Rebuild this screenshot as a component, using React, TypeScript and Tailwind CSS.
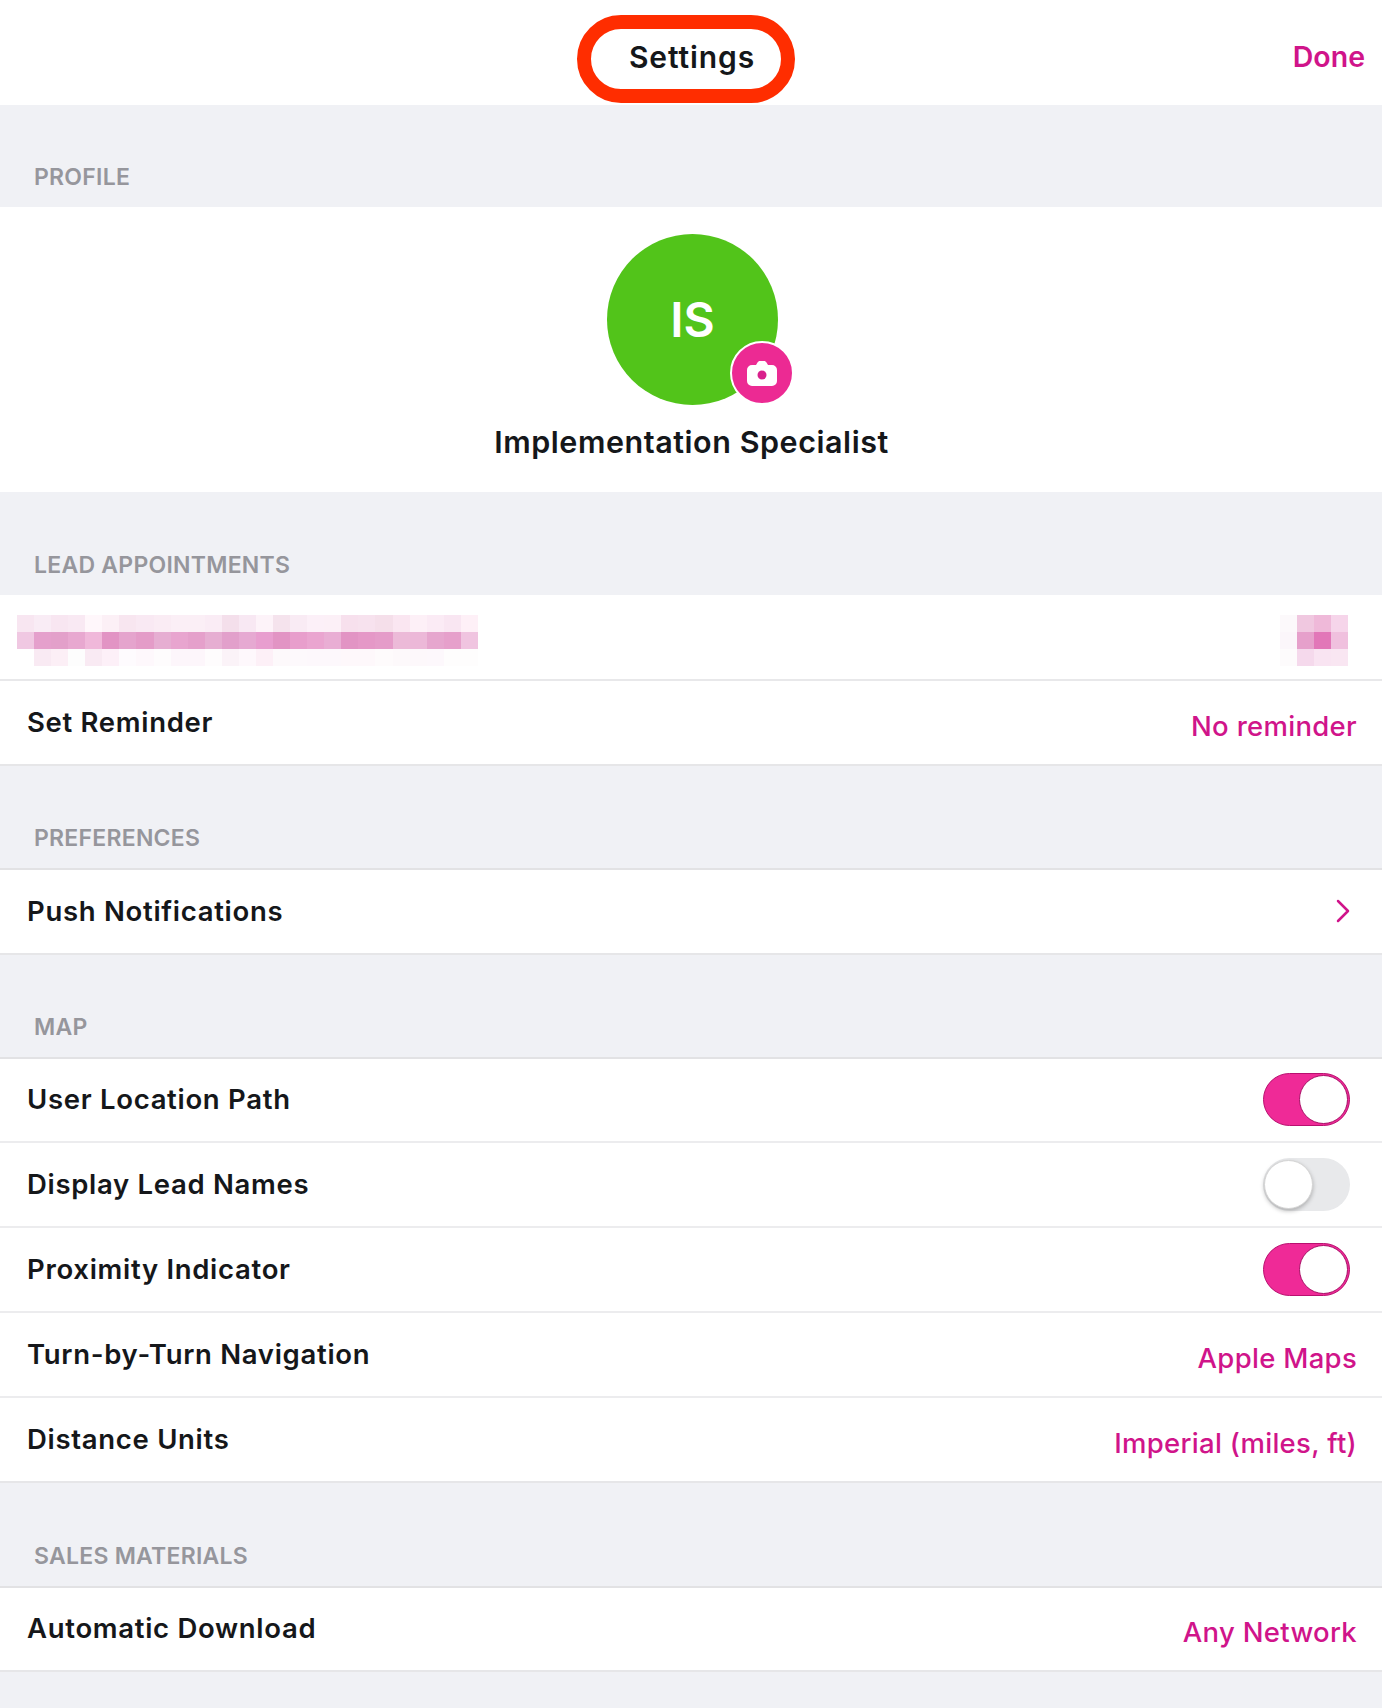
import { useState } from "react";

const pink = "#d0148a";

const leadCells = [
  ["#f8e6f1", "#f9ecf5", "#f8e6f1", "#f9e9f3", "#fff7fb", "#fcf0f6", "#f8e6f0", "#f9e9f3", "#faecf4", "#fbeff6", "#fbeff6", "#faecf5", "#f4dfeb", "#f8e8f3", "#fdf3f9", "#f5e3ed", "#f9ebf4", "#fcf0f8", "#fcf0f7", "#f7e0ed", "#f7e2ee", "#f5dfea", "#fae6f1", "#fdf0f7", "#fbebf5", "#f9e6f2", "#fef0f7"],
  ["#f0c8e2", "#e5a0cc", "#e3a0ca", "#e8a8d0", "#f0b8da", "#e294c4", "#e5a4cd", "#e49cc8", "#e6aed2", "#e8a5cf", "#e5a0cb", "#e6aed2", "#e2a0cb", "#e6a9d2", "#e89ecf", "#e294c4", "#e89ecc", "#eaa5d0", "#e9aed4", "#e294c4", "#e598c7", "#e59cc9", "#ecbad8", "#ecb8d8", "#e6a6ce", "#e6a0cb", "#f0c4e0"],
  ["#ffffff", "#f9eaf3", "#fceff6", "#fdfdfd", "#f9eaf3", "#fdf0f8", "#fefbfe", "#fef8fc", "#fefcfd", "#fdf6fb", "#fdf6fb", "#fefcfd", "#fbf3f8", "#fef8fc", "#fdf0f7", "#fdf9fb", "#fdf9fc", "#fdf8fc", "#fdf8fc", "#fef8fb", "#fef8fb", "#fefbfc", "#fdf9fb", "#fdf8fb", "#fdf8fc", "#fefdfd", "#fefdfd"],
];

const countCells = [
  ["#fcf9fb", "#f0c8e0", "#efb9d9", "#f6d5ea"],
  ["#fbf6fa", "#e6a0cb", "#e277b8", "#f0c0de"],
  ["#fdfbfc", "#f5d9ec", "#f9e4f2", "#f9e6f2"],
];

function Mosaic({ cells }: { cells: string[][] }) {
  const size = 17.07;
  return (
    <svg
      width={cells[0].length * size}
      height={cells.length * size}
      viewBox={`0 0 ${cells[0].length * size} ${cells.length * size}`}
      shapeRendering="crispEdges"
    >
      {cells.map((row, y) =>
        row.map((fill, x) => (
          <rect key={`${x}-${y}`} x={x * size} y={y * size} width={size + 0.5} height={size + 0.5} fill={fill} />
        )),
      )}
    </svg>
  );
}

function SectionLabel({ children, short }: { children: string; short?: boolean }) {
  return (
    <div
      className={`${
        short ? "h-[102px]" : "h-[103px]"
      } flex items-end pb-[13px] pl-[34px] text-[23px] leading-[34px] font-semibold tracking-[0.25px] text-[#96969c]`}
    >
      {children}
    </div>
  );
}

function Toggle({ initial }: { initial: boolean }) {
  const [on, setOn] = useState(initial);
  return (
    <button
      type="button"
      onClick={() => setOn(!on)}
      className={`w-[87px] h-[53px] rounded-full flex items-center px-[1px] ${
        on ? "bg-[#ef2a97] justify-end border border-[#b8106f]" : "bg-[#e8e9eb] justify-start"
      }`}
    >
      <span
        className={`block w-[49px] h-[49px] rounded-full bg-white ${
          on ? "border border-[#a80f66]" : "border border-[#d4d4d4] shadow-[0_2px_4px_rgba(0,0,0,0.25)]"
        }`}
      />
    </button>
  );
}

function Row({ label, value, children, last }: { label: string; value?: string; children?: React.ReactNode; last?: boolean }) {
  return (
    <div
      className={`h-[84.8px] bg-white flex items-center justify-between pl-[27px] ${
        last ? "border-b-2 border-[#e6e6e8]" : "border-b-2 border-[#ececee]"
      }`}
    >
      <span className="text-[27.5px] font-semibold tracking-[0.7px] text-[#15171a]">{label}</span>
      {value ? (
        <span className="pr-[25px] pt-[8px] text-[27.5px] font-medium tracking-[0.3px]" style={{ color: pink }}>
          {value}
        </span>
      ) : (
        <div className="pr-[32px] flex items-center">{children}</div>
      )}
    </div>
  );
}

export default function App() {
  return (
    <div className="w-[1382px] h-[1708px] overflow-hidden bg-[#f0f1f5] font-['Inter',sans-serif]">
      {/* Nav bar */}
      <div className="relative h-[105px] bg-white flex items-center justify-center">
        <span className="text-[30px] font-semibold tracking-[0.9px] text-[#15171a] pl-[2px] pt-[9px]">Settings</span>
        <span className="absolute right-[17px] top-[37px] text-[28.5px] leading-[40px] font-semibold" style={{ color: pink }}>
          Done
        </span>
        <div className="absolute left-[577px] top-[15px] w-[218px] h-[88px] rounded-full border-[14px] border-[#ff2d00]" />
      </div>

      <div className="h-[102px] flex items-end pb-[13px] pl-[34px] text-[23px] leading-[34px] font-semibold tracking-[0.25px] text-[#96969c]">
        PROFILE
      </div>
      <div className="h-[285px] bg-white flex flex-col items-center pt-[27px]">
        <div className="relative w-[171px] h-[171px] rounded-full bg-[#52c41a] flex items-center justify-center ml-[3px]">
          <span className="text-[48px] font-semibold text-white">IS</span>
          <div className="absolute left-[123px] top-[107px] w-[64px] h-[64px] rounded-full bg-[#ec2a93] border-2 border-white flex items-center justify-center">
            <svg width="30" height="25" viewBox="0 0 30 25">
              <path
                fill="#fff"
                d="M5 4h4l1.500-2.500C11 .6 11.800 0 13 0h4c1.200 0 2 .6 2.500 1.500L21 4h4a5 5 0 0 1 5 5v11a5 5 0 0 1-5 5H5a5 5 0 0 1-5-5V9a5 5 0 0 1 5-5z"
              />
              <circle cx="15" cy="14" r="4.500" fill="#d9208c" />
            </svg>
          </div>
        </div>
        <div className="mt-[16px] text-[30.5px] leading-[42px] font-semibold tracking-[0.55px] text-[#15171a] ml-[1px]">
          Implementation Specialist
        </div>
      </div>

      <SectionLabel>LEAD APPOINTMENTS</SectionLabel>
      <div className="h-[86px] bg-white border-b-2 border-[#e8e8ea] flex items-start justify-between pt-[20px] pl-[17px] pr-[34px]">
        <Mosaic cells={leadCells} />
        <Mosaic cells={countCells} />
      </div>
      <Row label="Set Reminder" value="No reminder" last />

      <SectionLabel short>PREFERENCES</SectionLabel>
      <div className="border-t-2 border-[#e2e2e4]">
        <Row label="Push Notifications" last>
          <svg width="14" height="24" viewBox="0 0 14 24" fill="none" stroke={pink} strokeWidth="2.500" strokeLinecap="round" strokeLinejoin="round">
            <path d="M2 2l10 10L2 22" />
          </svg>
        </Row>
      </div>

      <SectionLabel short>MAP</SectionLabel>
      <div className="border-t-2 border-[#e2e2e4]">
        <Row label="User Location Path">
          <Toggle initial />
        </Row>
        <Row label="Display Lead Names">
          <Toggle initial={false} />
        </Row>
        <Row label="Proximity Indicator">
          <Toggle initial />
        </Row>
        <Row label="Turn-by-Turn Navigation" value="Apple Maps" />
        <Row label="Distance Units" value="Imperial (miles, ft)" last />
      </div>

      <SectionLabel>SALES MATERIALS</SectionLabel>
      <div className="border-t-2 border-[#e2e2e4]">
        <Row label="Automatic Download" value="Any Network" last />
      </div>
    </div>
  );
}
